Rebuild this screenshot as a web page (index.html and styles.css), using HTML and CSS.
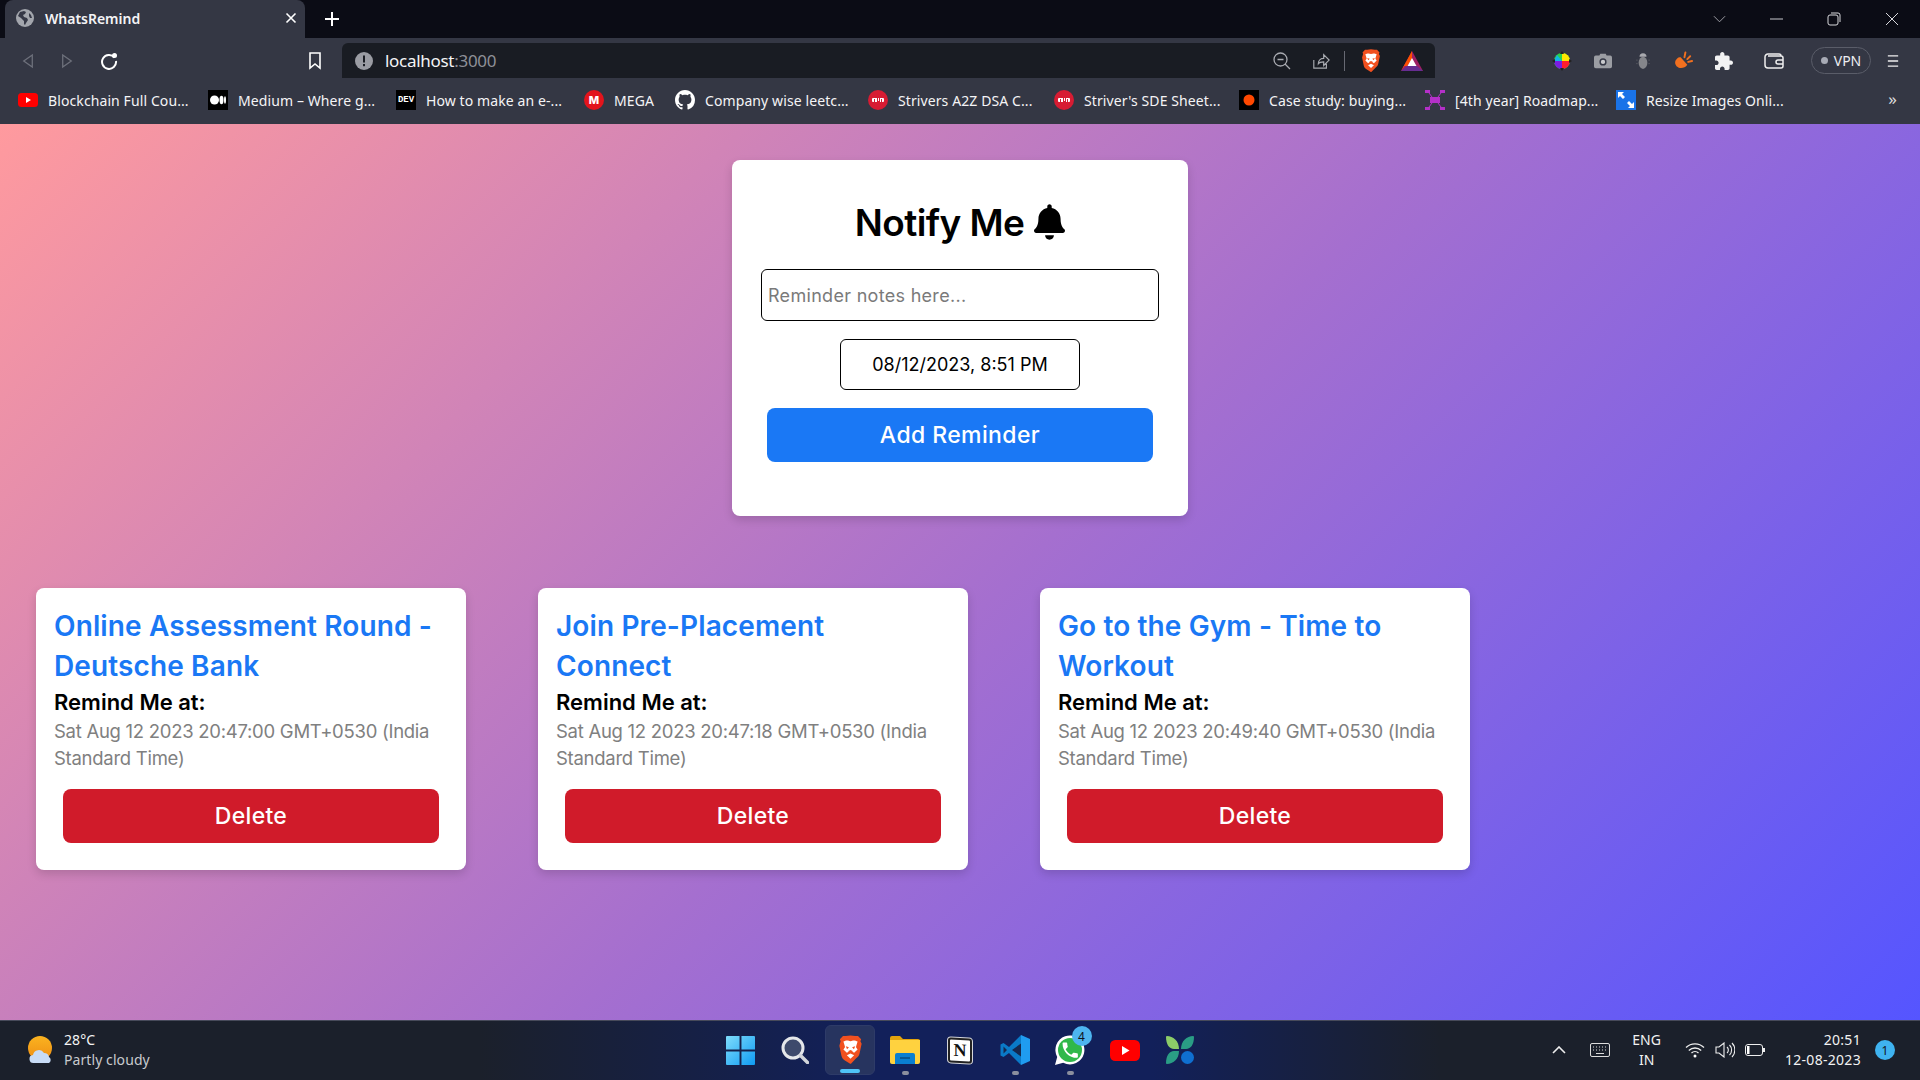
FILE: index.html
```html
<!DOCTYPE html>
<html lang="en">
<head>
<meta charset="utf-8">
<title>WhatsRemind</title>
<link rel="stylesheet" href="styles.css">
</head>
<body>
<svg class="defs" width="0" height="0" aria-hidden="true">
  <symbol id="brave" viewBox="0 0 24 28">
    <path fill="#f1501f" d="M12 0l4.600.6 2.600-.1 3 3.200-.7 2 1.200 2.200-2 9.500c-.5 2.400-1.500 3.300-3.300 4.600L12.700 27c-.5.3-1 .3-1.400 0l-4.700-3c-1.800-1.300-2.800-2.200-3.300-4.600l-2-9.500L2.500 5.700l-.7-2 3-3.200 2.600.1z"/>
    <path fill="#fff" d="M12 5.500c1.200 0 2.200-.6 3-.6 1.300 0 2.800.6 3.800 1l-1.300 4.200-.2 1.300 1.500 2-3.300 3.200-1.700-1-1.800.5-1.800-.5-1.700 1-3.300-3.200 1.500-2-.2-1.300L5.200 5.900c1-.4 2.500-1 3.800-1 .8 0 1.800.6 3 .6z"/>
    <path fill="#f1501f" d="M7.500 10.500l3 .8-1.800 1.900zM16.500 10.500l-3 .8 1.800 1.900zM10 15l2-1 2 1-.5 2.500-1.500 1-1.500-1z"/>
    <path fill="#fff" d="M8.500 19l3.500-1.700 3.500 1.700-3.500 3.500z"/>
  </symbol>
  <symbol id="yt" viewBox="0 0 20 14">
    <rect width="20" height="14" rx="3.500" fill="#f00"/>
    <path fill="#fff" d="M8 4l5 3-5 3z"/>
  </symbol>
  <symbol id="tuf" viewBox="0 0 20 20">
    <circle cx="10" cy="10" r="10" fill="#d71c33"/>
    <rect x="4" y="8" width="12" height="4" rx="1" fill="#fff"/>
    <path fill="#d71c33" d="M6 9h1v3H6zM9 8h1v3h1V8h1v4H9zM13 9h1v3h-1z"/>
  </symbol>
</svg>

<div class="screen">
  <div class="tabstrip">
    <div class="tab">
      <svg class="tab-globe" viewBox="0 0 18 18"><circle cx="9" cy="9" r="9" fill="#a3a6ad"/><path fill="#353846" d="M4 3l4-1 2 1-1 2-2 1 1 2 3 1 1 2-2 3-1 2-1-1v-3L5 9 2 7zM13 4l2 2 1 3-2 0-1-2z"/></svg>
      <span class="tab-title">WhatsRemind</span>
      <svg class="tab-close" viewBox="0 0 12 12"><path d="M1.500 1.500l9 9M10.500 1.500l-9 9"/></svg>
    </div>
    <svg class="tab-new" viewBox="0 0 16 16"><path d="M8 1v14M1 8h14"/></svg>
    <div class="win-controls">
      <svg class="wc wc-a" viewBox="0 0 14 8"><path d="M1 1l6 6 6-6"/></svg>
      <svg class="wc wc-b" viewBox="0 0 14 2"><path d="M0 1h14"/></svg>
      <svg class="wc wc-c" viewBox="0 0 14 14"><rect x="1" y="3" width="10" height="10" rx="2"/><path d="M4 1h7a2 2 0 012 2v7"/></svg>
      <svg class="wc wc-d" viewBox="0 0 14 14"><path d="M1 1l12 12M13 1L1 13"/></svg>
    </div>
  </div>

  <div class="toolbar">
    <div class="nav-btns">
      <svg class="nav nav-dim" viewBox="0 0 14 18"><path d="M12 2L2 9l10 7z"/></svg>
      <svg class="nav nav-dim" viewBox="0 0 14 18"><path d="M2 2l10 7-10 7z"/></svg>
      <svg class="nav nav-reload" viewBox="0 0 18 18"><path d="M14.500 5.500A7 7 0 1016 9"/><circle cx="14.500" cy="3.500" r="2.500" fill="#fff" stroke="none"/></svg>
    </div>
    <svg class="bookmark" viewBox="0 0 14 18"><path d="M2 1h10v15l-5-4-5 4z"/></svg>
    <div class="urlbar">
      <svg class="info" viewBox="0 0 18 18"><circle cx="9" cy="9" r="9" fill="#9a9ca3"/><rect x="8" y="3.500" width="2" height="7" fill="#191c23"/><rect x="8" y="12" width="2" height="2.200" fill="#191c23"/></svg>
      <span class="url">localhost<span class="url-port">:3000</span></span>
      <div class="url-tools">
        <svg class="ut" viewBox="0 0 18 18"><circle cx="7.500" cy="7.500" r="6.500"/><path d="M4.500 7.500h6M12 12l5 5"/></svg>
        <svg class="ut" viewBox="0 0 20 18"><path d="M2 8v9h14v-5M7 12c0-4 3-6 6-6V2l6 6-6 6v-4c-3 0-5 .5-6 2z"/></svg>
        <span class="ut-sep"></span>
        <svg class="ut-brave"><use href="#brave"/></svg>
        <svg class="ut-bat" viewBox="0 0 22 20"><path fill="#9e1f63" d="M11 0l11 20H0z"/><path fill="#ff5000" d="M11 0v8l-5 7H3.500L0 20z"/><path fill="#662d91" d="M22 20H0l6-5h10z"/><path fill="#fff" d="M11 7l4.500 8h-9z"/></svg>
      </div>
    </div>
    <div class="ext-icons">
      <svg class="ext ext-wheel" viewBox="0 0 20 20"><circle cx="10" cy="10" r="8" fill="#2ad14a"/><path fill="#ffe600" d="M10 10V2a8 8 0 018 8z"/><path fill="#ff1d2e" d="M10 10h8a8 8 0 01-8 8z"/><path fill="#7a1de0" d="M10 10v8a8 8 0 01-8-8z"/><path fill="#12b3e8" d="M10 10H2l3-6z"/><path fill="#222" d="M10 0l2 3H8zM10 20l-2-3h4zM0 10l3-2v4zM20 10l-3 2V8z"/></svg>
      <svg class="ext ext-cam" viewBox="0 0 20 16"><path fill="#9b9da3" d="M6 2l1-2h6l1 2h4a2 2 0 012 2v10a2 2 0 01-2 2H2a2 2 0 01-2-2V4a2 2 0 012-2z"/><circle cx="10" cy="9" r="4" fill="#353846"/><circle cx="10" cy="9" r="2.400" fill="#c9cacd"/></svg>
      <svg class="ext ext-bug" viewBox="0 0 16 18"><ellipse cx="8" cy="11" rx="5" ry="7" fill="#85868b"/><path fill="#a8a9ae" d="M4 4a4 4 0 018 0z"/><path d="M2 8H0M14 8h2M2 12H0M14 12h2" stroke="#55565e"/></svg>
      <svg class="ext ext-horn" viewBox="0 0 20 20"><path fill="#f2701f" d="M7 6l7 8c-2 3-6 4-9 3S0 12 2 9s3-3 5-3z"/><path d="M11 6l1-5M14 8l3-3M15 11l4-1" stroke="#f2701f" stroke-width="2" stroke-linecap="round"/></svg>
      <svg class="ext ext-puzzle" viewBox="2 1 21 21"><path fill="#f2f2f3" d="M20.500 11H19V7c0-1.100-.9-2-2-2h-4V3.500C13 2.120 11.880 1 10.500 1S8 2.120 8 3.500V5H4c-1.100 0-1.990.9-1.990 2v3.800H3.500c1.490 0 2.700 1.210 2.700 2.700s-1.210 2.700-2.700 2.700H2V20c0 1.100.9 2 2 2h3.800v-1.500c0-1.490 1.210-2.700 2.700-2.700 1.490 0 2.700 1.210 2.700 2.700V22H17c1.100 0 2-.9 2-2v-4h1.500c1.380 0 2.500-1.120 2.500-2.500S21.880 11 20.500 11z"/></svg>
      <svg class="ext ext-wallet" viewBox="0 0 20 16"><path d="M17 3V3a2 2 0 00-2-2H4a3 3 0 00-3 3v8a3 3 0 003 3h13a2 2 0 002-2V5a2 2 0 00-2-2H4"/><path d="M19 7h-5a2 2 0 000 4h5"/></svg>
      <div class="vpn"><span class="vpn-dot"></span><span>VPN</span></div>
      <svg class="menu" viewBox="0 0 14 14"><path d="M1 1h12M1 7h12M1 13h12"/></svg>
    </div>
  </div>

  <div class="bookmarks">
    <div class="bm"><svg class="fav fav-yt"><use href="#yt"/></svg><span>Blockchain Full Cou...</span></div>
    <div class="bm"><span class="fav fav-med"><svg viewBox="0 0 20 20"><ellipse cx="6.500" cy="10" rx="4.500" ry="4.500" fill="#fff"/><ellipse cx="13.500" cy="10" rx="2" ry="4.200" fill="#fff"/><ellipse cx="17" cy="10" rx="1" ry="3.800" fill="#fff"/></svg></span><span>Medium – Where g...</span></div>
    <div class="bm"><span class="fav fav-dev">DEV</span><span>How to make an e-...</span></div>
    <div class="bm"><span class="fav fav-mega">M</span><span>MEGA</span></div>
    <div class="bm"><svg class="fav" viewBox="0 0 16 16"><path fill="#fff" d="M8 0C3.580 0 0 3.580 0 8c0 3.540 2.290 6.530 5.470 7.590.4.070.55-.17.55-.38 0-.19-.01-.82-.01-1.490-2.010.37-2.530-.49-2.690-.94-.09-.23-.48-.94-.82-1.130-.28-.15-.68-.52-.01-.53.63-.01 1.080.58 1.230.82.72 1.210 1.870.87 2.330.66.070-.52.28-.87.51-1.070-1.780-.2-3.640-.89-3.640-3.950 0-.87.31-1.590.82-2.150-.08-.2-.36-1.020.08-2.120 0 0 .67-.21 2.200.82.64-.18 1.320-.27 2-.27.68 0 1.360.09 2 .27 1.530-1.040 2.200-.82 2.200-.82.44 1.100.16 1.920.08 2.120.51.56.82 1.270.82 2.150 0 3.070-1.870 3.750-3.650 3.950.29.25.54.73.54 1.480 0 1.070-.01 1.930-.01 2.200 0 .21.15.46.55.38A8.013 8.013 0 0016 8c0-4.420-3.580-8-8-8z"/></svg><span>Company wise leetc...</span></div>
    <div class="bm"><svg class="fav"><use href="#tuf"/></svg><span>Strivers A2Z DSA C...</span></div>
    <div class="bm"><svg class="fav"><use href="#tuf"/></svg><span>Striver's SDE Sheet...</span></div>
    <div class="bm"><svg class="fav" viewBox="0 0 20 20"><rect width="20" height="20"/><circle cx="10" cy="10" r="5.500" fill="#ff4800"/></svg><span>Case study: buying...</span></div>
    <div class="bm"><svg class="fav" viewBox="0 0 20 20" fill="#b430c8"><rect x="5" y="7" width="10" height="6" /><rect y="0" width="5" height="3"/><rect x="15" width="5" height="3"/><rect y="17" width="5" height="3"/><rect x="15" y="17" width="5" height="3"/><path d="M4 3l3 4M16 3l-3 4M4 17l3-4M16 17l-3-4" stroke="#b430c8"/></svg><span>[4th year] Roadmap...</span></div>
    <div class="bm"><svg class="fav" viewBox="0 0 20 20"><rect width="20" height="20" fill="#1a73e8"/><path fill="#fff" d="M2 2h6L6 4l3 3-2 2-3-3-2 2zM18 18h-6l2-2-3-3 2-2 3 3 2-2z"/></svg><span>Resize Images Onli...</span></div>
    <span class="bm-more">»</span>
  </div>

  <main class="page">
    <section class="form-card">
      <h1 class="form-title">Notify Me<svg class="bell" viewBox="0 0 448 512"><path d="M224 512c35.320 0 63.970-28.650 63.970-64H160.030c0 35.350 28.650 64 63.970 64zm215.390-149.710c-19.320-20.760-55.470-51.990-55.470-154.290 0-77.700-54.480-139.900-127.940-155.160V32c0-17.670-14.320-32-31.980-32s-31.980 14.330-31.980 32v20.840C118.560 68.100 64.080 130.300 64.080 208c0 102.300-36.150 133.530-55.470 154.290-6 6.450-8.660 14.160-8.610 21.710.11 16.400 12.980 32 32.100 32h383.800c19.120 0 32-15.600 32.100-32 .05-7.550-2.610-15.270-8.610-21.710z"/></svg></h1>
      <input class="note-input" type="text" placeholder="Reminder notes here...">
      <input class="date-input" type="text" value="08/12/2023, 8:51 PM">
      <button class="add-btn" type="button">Add Reminder</button>
    </section>

    <section class="cards">
      <article class="card">
        <h2 class="card-title">Online Assessment Round - Deutsche Bank</h2>
        <h3 class="card-label">Remind Me at:</h3>
        <p class="card-date">Sat Aug 12 2023 20:47:00 GMT+0530 (India Standard Time)</p>
        <button class="del-btn" type="button">Delete</button>
      </article>
      <article class="card">
        <h2 class="card-title">Join Pre-Placement Connect</h2>
        <h3 class="card-label">Remind Me at:</h3>
        <p class="card-date">Sat Aug 12 2023 20:47:18 GMT+0530 (India Standard Time)</p>
        <button class="del-btn" type="button">Delete</button>
      </article>
      <article class="card">
        <h2 class="card-title">Go to the Gym - Time to Workout</h2>
        <h3 class="card-label">Remind Me at:</h3>
        <p class="card-date">Sat Aug 12 2023 20:49:40 GMT+0530 (India Standard Time)</p>
        <button class="del-btn" type="button">Delete</button>
      </article>
    </section>
  </main>

  <footer class="taskbar">
    <div class="tb-left">
      <svg class="weather" viewBox="0 0 28 28"><defs><linearGradient id="sun" x1="0" y1="0" x2="0" y2="1"><stop offset="0" stop-color="#fbb320"/><stop offset="1" stop-color="#ef8f14"/></linearGradient></defs><circle cx="13" cy="12" r="12" fill="url(#sun)"/><path fill="#c8dcf6" d="M7 27a4 4 0 01-1-8 6 6 0 0111-2 5 5 0 015 4 3.500 3.500 0 010 6z"/></svg>
      <div class="weather-text"><span class="temp">28°C</span><span class="cond">Partly cloudy</span></div>
    </div>
    <div class="tb-center">
      <div class="tb-app">
        <svg class="tb-win" viewBox="0 0 30 30"><defs><linearGradient id="win" x1="0" y1="0" x2="1" y2="1"><stop offset="0" stop-color="#7fdcfb"/><stop offset="1" stop-color="#0f9bf2"/></linearGradient></defs><path fill="url(#win)" d="M0 1a1 1 0 011-1h13v14H0zM16 0h13a1 1 0 011 1v13H16zM0 16h14v14H1a1 1 0 01-1-1zM16 16h14v13a1 1 0 01-1 1H16z"/></svg>
      </div>
      <div class="tb-app">
        <svg class="tb-search" viewBox="0 0 28 28"><circle cx="12" cy="12" r="10" fill="#3e4a6c" stroke="#e5e7ea" stroke-width="3"/><path d="M19.500 19.500l7 7" stroke="#d2d5da" stroke-width="3.500" stroke-linecap="round"/></svg>
      </div>
      <div class="tb-app tb-active">
        <svg class="tb-brave"><use href="#brave"/></svg>
        <span class="dot dot-active"></span>
      </div>
      <div class="tb-app">
        <svg class="tb-folder" viewBox="0 0 30 28"><path fill="#e3a30c" d="M0 2a2 2 0 012-2h8l3 3h15a2 2 0 012 2v4H0z"/><path fill="#ffd23f" d="M0 4h30v22a2 2 0 01-2 2H2a2 2 0 01-2-2z"/><path fill="#0a7fd1" d="M5 19a2 2 0 012-2h16a2 2 0 012 2v9H5z"/><path stroke="#07345c" d="M10 22h10"/></svg>
        <span class="dot"></span>
      </div>
      <div class="tb-app">
        <span class="tb-notion">N</span>
      </div>
      <div class="tb-app">
        <svg class="tb-vsc" viewBox="0 0 30 30"><path fill="#0a7ac8" d="M21 0L9 12 3.500 8 .5 9.500v11L3.500 22 9 18l12 12 3-14V8z"/><path fill="#1f9cf0" d="M21 0l9 4v22l-9 4z"/><path fill="#15284f" d="M21 8.500v13L12 15zM3.500 11.500v7L7 15z"/></svg>
        <span class="dot"></span>
      </div>
      <div class="tb-app">
        <svg class="tb-wa" viewBox="0 0 30 30"><path fill="#fff" d="M0 30l2.200-8A14.500 14.500 0 1115 29.500a14.500 14.500 0 01-6.800-1.700z"/><circle cx="15" cy="15" r="12" fill="#2fb84a"/><g transform="translate(5 5) scale(.85)"><path fill="#fff" d="M6.620 10.790c1.440 2.830 3.760 5.140 6.590 6.590l2.200-2.200c.27-.27.67-.36 1.020-.24 1.120.37 2.330.57 3.570.57.55 0 1 .45 1 1V20c0 .55-.45 1-1 1-9.390 0-17-7.610-17-17 0-.55.45-1 1-1h3.500c.55 0 1 .45 1 1 0 1.250.2 2.450.57 3.570.11.35.03.74-.25 1.020l-2.200 2.200z"/></g></svg>
        <span class="wa-badge">4</span>
        <span class="dot"></span>
      </div>
      <div class="tb-app">
        <svg class="tb-yt"><use href="#yt"/></svg>
      </div>
      <div class="tb-app">
        <svg class="tb-leaf" viewBox="0 0 28 28"><path fill="#8ccc68" d="M0 1a1 1 0 011-1c6 0 12 5 12 13H8C3 13 0 8 0 1z"/><path fill="#2a9d85" d="M28 1a1 1 0 00-1-1c-6 0-12 5-12 13h5c5 0 8-5 8-12z"/><path fill="#2a9d85" d="M0 27c0 .5.5 1 1 1 6 0 12-5 12-13H8c-5 0-8 5-8 12z"/><circle cx="21.500" cy="21.500" r="6.500" fill="#0f6fd0"/></svg>
      </div>
    </div>
    <div class="tb-right">
      <svg class="tray-chev" viewBox="0 0 14 8"><path d="M1 7l6-6 6 6"/></svg>
      <svg class="tray-kbd" viewBox="0 0 20 14"><rect x=".5" y=".5" width="19" height="13" rx="1.500"/><path d="M3 4h1M6 4h1M9 4h1M12 4h1M15 4h1M3 7h1M6 7h1M9 7h1M12 7h1M15 7h1M6 10.500h8"/></svg>
      <div class="tray-lang"><span>ENG</span><span>IN</span></div>
      <svg class="tray-wifi" viewBox="0 0 20 16"><path d="M1 5.500a13 13 0 0118 0M3.800 8.500a9 9 0 0112.400 0M6.500 11a5 5 0 017 0"/><circle cx="10" cy="14" r="1.500" fill="#fff" stroke="none"/></svg>
      <svg class="tray-vol" viewBox="0 0 20 16"><path d="M1 5h3l5-4v14l-5-4H1zM12 5a4 4 0 010 6M14.500 3a7 7 0 010 10M17 1a10 10 0 010 14"/></svg>
      <svg class="tray-bat" viewBox="0 0 20 12"><rect x=".5" y=".5" width="17" height="11" rx="2.500"/><rect x="2" y="2" width="2.500" height="8" fill="#fff" stroke="none"/><path d="M19 4v4" stroke-width="2"/></svg>
      <div class="tray-clock"><span>20:51</span><span>12-08-2023</span></div>
      <span class="notif">1</span>
    </div>
  </footer>
</div>
</body>
</html>
```
FILE: styles.css
```css
* { box-sizing: border-box; }
html, body { margin: 0; height: 100%; }
body { overflow: hidden; font-family: "Inter", "Liberation Sans", sans-serif; }
.defs { position: absolute; }
.screen { display: flex; flex-direction: column; height: 1080px; width: 1920px; }

/* tab strip */
.tabstrip { height: 38px; background: #0b0c15; display: flex; align-items: flex-end; padding-left: 5px; flex: none; }
.tab { width: 300px; height: 38px; background: #343744; border-radius: 8px 8px 0 0; display: flex; align-items: center; padding: 0 6px 2px 11px; }
.tab-globe { width: 18px; height: 18px; margin-right: 11px; flex: none; }
.tab-title { flex: 1; color: #f4f4f6; font: 600 14px "Noto Sans", sans-serif; letter-spacing: -.02px; }
.tab-close { width: 12px; height: 12px; margin-right: 2px; fill: none; stroke: #fff; stroke-width: 1.600; }
.tab-new { width: 16px; height: 16px; margin: 0 0 11px 19px; fill: none; stroke: #fff; stroke-width: 2; flex: none; }
.win-controls { margin-left: auto; height: 38px; display: flex; align-items: center; }
.wc { fill: none; stroke: #d8d8dc; stroke-width: 1; display: block; }
.wc-a { width: 13px; height: 8px; margin-right: 44px; stroke: #a8a8ae; }
.wc-b { width: 13px; height: 2px; margin-right: 44px; }
.wc-c { width: 14px; height: 14px; margin-right: 44px; }
.wc-d { width: 14px; height: 14px; margin-right: 21px; }

/* toolbar */
.toolbar { height: 40px; padding-top: 5px; background: #343744; display: flex; align-items: center; flex: none; }
.nav-btns { display: flex; align-items: center; padding-left: 22px; flex: none; }
.nav { width: 12px; height: 18px; fill: none; stroke: #6d707b; stroke-width: 1.500; margin-right: 27px; }
.nav-reload { width: 18px; height: 18px; stroke: #fff; stroke-width: 2; fill: none; margin-right: 0; }
.bookmark { width: 14px; height: 18px; fill: none; stroke: #fff; stroke-width: 1.600; margin-left: 190px; flex: none; }
.urlbar { margin-left: 20px; width: 1093px; height: 35px; background: #191c23; border-radius: 6px 6px 0 0; display: flex; align-items: center; padding: 0 12px 0 13px; flex: none; }
.info { width: 18px; height: 18px; margin-right: 12px; }
.url { color: #f4f4f6; font: 400 17px "Noto Sans", sans-serif; letter-spacing: -.29px; }
.url-port { color: #8e9097; }
.url-tools { margin-left: auto; display: flex; align-items: center; }
.ut { width: 18px; height: 18px; fill: none; stroke: #a8aab0; stroke-width: 1.300; margin-right: 21px; }
.ut-sep { width: 1px; height: 20px; background: #676973; margin-right: 16px; margin-left: -7px; }
.ut-brave { width: 20px; height: 24px; margin-right: 20px; }
.ut-bat { width: 22px; height: 20px; }
.ext-icons { display: flex; align-items: center; flex: 1; padding-left: 117px; }
.ext { display: block; flex: none; }
.ext-wheel { width: 20px; height: 20px; margin-right: 22px; }
.ext-cam { width: 18px; height: 16px; margin-right: 24px; }
.ext-bug { width: 14px; height: 18px; margin-right: 24px; }
.ext-horn { width: 19px; height: 20px; margin-right: 22px; }
.ext-puzzle { width: 18px; height: 18px; margin-right: 31px; }
.ext-wallet { width: 20px; height: 16px; fill: none; stroke: #eee; stroke-width: 1.500; margin-right: 27px; }
.vpn { width: 60px; height: 27px; border: 1.500px solid #5a5d69; border-radius: 14px; display: flex; align-items: center; justify-content: center; gap: 6px; color: #eceef2; font: 400 14px "Noto Sans", sans-serif; flex: none; }
.vpn-dot { width: 7px; height: 7px; border-radius: 50%; background: #a8abb6; }
.menu { width: 12px; height: 14px; margin-left: 16px; fill: none; stroke: #eee; stroke-width: 1.500; flex: none; }

/* bookmarks */
.bookmarks { height: 46px; padding-bottom: 2px; background: #343744; display: grid; grid-template-columns: 190px 188px 188px 91px 193px 186px 185px 186px 191px 260px 1fr; align-items: center; padding-left: 18px; flex: none; color: #f4f4f6; font: 400 14px "Noto Sans", sans-serif; letter-spacing: .1px; }
.bm { display: flex; align-items: center; gap: 10px; white-space: nowrap; }
.fav { width: 20px; height: 20px; display: block; flex: none; }
.fav-yt { height: 20px; }
.fav-med { background: #000; display: flex; align-items: center; }
.fav-med svg { width: 20px; height: 20px; }
.fav-dev { background: #000; color: #fff; font: 700 9px "Liberation Mono", monospace; letter-spacing: 0; display: flex; align-items: center; justify-content: center; }
.fav-mega { background: #e3141c; border-radius: 50%; color: #fff; font: 800 11px "Inter", sans-serif; letter-spacing: 0; display: flex; align-items: center; justify-content: center; }
.bm-more { justify-self: end; margin-right: 23px; font-size: 17px; color: #ddd; line-height: 1; margin-top: -4px; }

/* page */
.page { flex: 1; min-height: 0; background: linear-gradient(135deg, #ff9a9e 0%, #a56fcf 52%, #5555ff 100%); padding-top: 36px; }
.form-card { width: 456px; height: 356px; margin: 0 auto; background: #fff; border-radius: 8px; box-shadow: 0 4px 10px rgba(0,0,0,.15); padding: 32px 0 0; display: flex; flex-direction: column; align-items: center; }
.form-title { margin: 0 0 15px; font-size: 37px; font-weight: 600; line-height: 62px; color: #000; letter-spacing: -.6px; display: flex; align-items: center; gap: 10px; }
.bell { width: 31px; height: 36px; fill: #000; margin-top: -3px; }
.note-input { width: 398px; height: 52px; border: 1.500px solid #000; border-radius: 6px; padding: 0 6px; font: 400 18px "Inter", sans-serif; letter-spacing: .3px; background: #fff; outline: none; }
.note-input::placeholder { color: #7a7a7a; opacity: 1; }
.date-input { width: 240px; height: 51px; margin-top: 18px; border: 1.500px solid #000; border-radius: 6px; text-align: center; font: 400 18px "Inter", sans-serif; letter-spacing: 0; color: #000; background: #fff; outline: none; }
.add-btn { width: 386px; height: 54px; margin-top: 18px; background: #1a78f5; border: 0; border-radius: 8px; color: #fff; font: 500 23px "Inter", sans-serif; letter-spacing: .4px; }
.cards { display: flex; gap: 72px; padding-left: 36px; margin-top: 72px; }
.card { width: 430px; height: 282px; background: #fff; border-radius: 8px; box-shadow: 0 4px 10px rgba(0,0,0,.15); padding: 18px 18px 0; display: flex; flex-direction: column; }
.card-title { margin: 0; max-width: 385px; font-size: 28px; font-weight: 600; line-height: 40px; color: #1a78f5; letter-spacing: .12px; }
.card-label { margin: 0; font-size: 22px; font-weight: 600; line-height: 32px; color: #000; letter-spacing: 0; }
.card-date { margin: 0; font-size: 18.500px; font-weight: 400; line-height: 27px; color: #808080; letter-spacing: -.27px; }
.del-btn { align-self: center; width: 376px; height: 54px; margin-top: 17px; background: #d01b2a; border: 0; border-radius: 8px; color: #fff; font: 500 23px "Inter", sans-serif; letter-spacing: .3px; }

/* taskbar */
.taskbar { height: 60px; flex: none; border-top: 1px solid #474a5a; padding-bottom: 1px; background: linear-gradient(90deg, #1b202b 0%, #1b202b 25%, #12205a 45%, #12205a 60%, #1b202b 75%, #1b202b 100%); display: grid; grid-template-columns: 1fr auto 1fr; align-items: center; }
.tb-left { display: flex; align-items: center; padding-left: 27px; }
.weather { width: 28px; height: 28px; margin-right: 9px; }
.weather-text { display: flex; flex-direction: column; font: 400 14px "Noto Sans", sans-serif; line-height: 20px; letter-spacing: .08px; }
.temp { color: #f4f4f4; }
.cond { color: #c8cace; }
.tb-center { display: flex; }
.tb-app { position: relative; width: 55px; height: 50px; display: flex; align-items: center; justify-content: center; }
.tb-active { background: #27345f; border-radius: 6px; border: 1px solid #2e3b68; width: 50px; margin: 0 2.500px; }
.tb-win { width: 29px; height: 29px; }
.tb-search { width: 28px; height: 28px; }
.tb-brave { width: 25px; height: 30px; }
.tb-folder { width: 30px; height: 28px; }
.tb-notion { width: 24px; height: 25px; background: #fff; border: 2px solid #222; box-shadow: 0 0 0 1px #d5d6da; border-radius: 3px; color: #111; font: 700 18px "Liberation Serif", serif; display: flex; align-items: center; justify-content: center; transform: skewY(3deg); }
.tb-vsc { width: 30px; height: 30px; }
.tb-wa { width: 30px; height: 30px; }
.tb-yt { width: 30px; height: 21px; }
.tb-leaf { width: 28px; height: 28px; }
.dot { position: absolute; bottom: 0; left: 50%; width: 7px; height: 4px; margin-left: -3.500px; border-radius: 2px; background: #8b8f9e; }
.dot-active { width: 20px; margin-left: -10px; background: #4fc3f7; bottom: 1px; }
.wa-badge { position: absolute; top: 1px; left: 29px; width: 20px; height: 20px; border-radius: 50%; background: #4db5f0; color: #10131c; font: 400 12px "Noto Sans", sans-serif; display: flex; align-items: center; justify-content: center; }
.tb-right { display: flex; align-items: center; justify-content: flex-end; color: #f2f2f2; font: 400 14px "Noto Sans", sans-serif; }
.tray-chev { width: 14px; height: 8px; fill: none; stroke: #eee; stroke-width: 1.600; margin-right: 24px; }
.tray-kbd { width: 20px; height: 14px; fill: none; stroke: #ddd; stroke-width: 1; margin-right: 22px; }
.tray-lang { display: flex; flex-direction: column; align-items: center; line-height: 20px; margin-right: 24px; letter-spacing: 0; }
.tray-wifi { width: 20px; height: 16px; fill: none; stroke: #eee; stroke-width: 1.300; margin-right: 10px; }
.tray-vol { width: 20px; height: 16px; fill: none; stroke: #eee; stroke-width: 1.100; margin-right: 10px; }
.tray-bat { width: 20px; height: 12px; fill: none; stroke: #eee; stroke-width: 1; margin-right: 20px; }
.tray-clock { display: flex; flex-direction: column; align-items: flex-end; line-height: 20px; letter-spacing: .3px; margin-right: 14px; }
.notif { width: 20px; height: 20px; margin-right: 25px; border-radius: 50%; background: #3fb3f0; color: #12151c; font-size: 12px; display: flex; align-items: center; justify-content: center; }
```
